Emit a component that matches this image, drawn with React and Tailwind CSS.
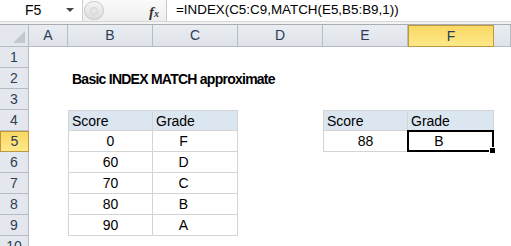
import React from 'react';

const cols = ['A', 'B', 'C', 'D', 'E', 'F', ''];
const rows = [1, 2, 3, 4, 5, 6, 7, 8, 9, 10];

// contenido de las celdas: [fila][columna]
const cells = {
  '2B': { text: 'Basic INDEX MATCH approximate', bold: true },
  '4B': { text: 'Score', head: true },
  '4C': { text: 'Grade', head: true },
  '5B': { text: '0' }, '5C': { text: 'F', grade: true },
  '6B': { text: '60' }, '6C': { text: 'D', grade: true },
  '7B': { text: '70' }, '7C': { text: 'C', grade: true },
  '8B': { text: '80' }, '8C': { text: 'B', grade: true },
  '9B': { text: '90' }, '9C': { text: 'A', grade: true },
  '4E': { text: 'Score', head: true },
  '4F': { text: 'Grade', head: true },
  '5E': { text: '88' },
  '5F': { text: 'B', grade: true, selected: true },
};

const inTable = (r, c) =>
  (r >= 4 && r <= 9 && (c === 'B' || c === 'C')) ||
  (r >= 4 && r <= 5 && (c === 'E' || c === 'F'));

const Cell = ({ r, c }) => {
  const data = cells[`${r}${c}`];
  const table = inTable(r, c);
  let cls = 'relative h-[21px] flex items-center text-[14px] text-black whitespace-nowrap';
  if (table) {
    cls += ' border-r border-b border-[#d4d4d4]';
    if (r === 4) cls += ' border-t';
    if (c === 'B' || c === 'E') cls += ' border-l';
  }
  if (data && data.head) cls += ' bg-[#dce6f1] justify-start pl-[3px]';
  else if (data && data.bold) cls += ' font-bold pl-[4px] overflow-visible z-10 text-[13px] tracking-[-0.75px]';
  else if (data && data.grade) cls += ' justify-center pr-[23px]';
  else if (data) cls += ' justify-center';

  return (
    <div className={cls}>
      {data && <span className="pt-[1px]">{data.text}</span>}
      {data && data.selected && (
        <>
          <div className="absolute -left-[1px] -top-[1px] -right-[1px] -bottom-[1px] border-2 border-black" />
          <div className="absolute -right-[3px] -bottom-[3px] w-[5px] h-[5px] bg-black border border-white box-content" />
        </>
      )}
    </div>
  );
};

export default function App() {
  return (
    <div className="w-[511px] h-[246px] overflow-hidden bg-white" style={{ fontFamily: '"Liberation Sans", Arial, sans-serif' }}>
      {/* Barra de fórmulas */}
      <div className="flex h-[21px] bg-white">
        <div className="w-[82px] flex items-center relative">
          <span className="ml-[25px] text-[14px] text-black">F5</span>
          <span className="absolute left-[66px] top-[8px] w-0 h-0 border-l-[4px] border-r-[4px] border-t-[4px] border-l-transparent border-r-transparent border-t-[#444]" />
        </div>
        <div className="w-[84px] flex items-center relative bg-gradient-to-b from-[#fafafa] to-[#eeeeee] border-l border-[#d0d0d0]">
          <div className="absolute left-[1px] top-[1px] w-[20px] h-[19px] rounded-full border border-[#c8c8c8] bg-gradient-to-b from-[#f4f4f4] to-[#dcdcdc] flex items-center justify-center">
            <div className="w-[8px] h-[8px] rounded-full bg-[#e6e6e6] border border-[#d4d4d4]" />
          </div>
          <span className="absolute left-[66px] top-[1px] italic font-bold text-[15px] text-[#333]" style={{ fontFamily: '"Liberation Serif", serif' }}>
            f<span className="text-[10px]">x</span>
          </span>
        </div>
        <div className="flex-1 flex items-center border-l border-[#c8c8c8] pl-[9px] text-[13.4px] text-black whitespace-nowrap">
          =INDEX(C5:C9,MATCH(E5,B5:B9,1))
        </div>
      </div>
      <div className="h-[1px] bg-[#d6d6d6]" />
      <div className="h-[2px] bg-[#f3f3f3]" />
      <div className="h-[1px] bg-[#a9acb1]" />

      {/* Hoja */}
      <div className="grid grid-cols-[29px_39px_85px_85px_85px_85px_86px_1fr]">
        {/* encabezados de columna */}
        <div className="h-[22px] bg-[#e4e8ee] border-r border-b border-[#b6bcc6] relative overflow-hidden">
          <svg className="absolute right-[3px] bottom-[3px]" width="12" height="12">
            <polygon points="12,0 12,12 0,12" fill="#c3c8cf" />
          </svg>
        </div>
        {cols.map((c, i) =>
          c === 'F' ? (
            <div key={i} className="h-[22px] flex items-center justify-center text-[14px] text-[#2c3e57] bg-gradient-to-b from-[#f9d862] to-[#ffe98a] border border-[#c2953f]">
              {c}
            </div>
          ) : (
            <div key={i} className="h-[22px] flex items-center justify-center text-[14px] text-[#2c3e57] bg-gradient-to-b from-[#e9ecf1] to-[#dfe3e9] border-r border-b border-[#b6bcc6]">
              {c}
            </div>
          )
        )}

        {rows.map((r) => (
          <React.Fragment key={r}>
            {r === 5 ? (
              <div className="h-[21px] flex items-center justify-center text-[14px] text-[#2c3e57] bg-gradient-to-b from-[#f9d862] to-[#ffe98a] border border-[#c2953f]">
                {r}
              </div>
            ) : (
              <div className="h-[21px] flex items-center justify-center text-[14px] text-[#2c3e57] bg-[#e4e8ee] border-r border-b border-[#b6bcc6]">
                {r}
              </div>
            )}
            {cols.map((c, i) => (
              <Cell key={i} r={r} c={c} />
            ))}
          </React.Fragment>
        ))}
      </div>
    </div>
  );
}
